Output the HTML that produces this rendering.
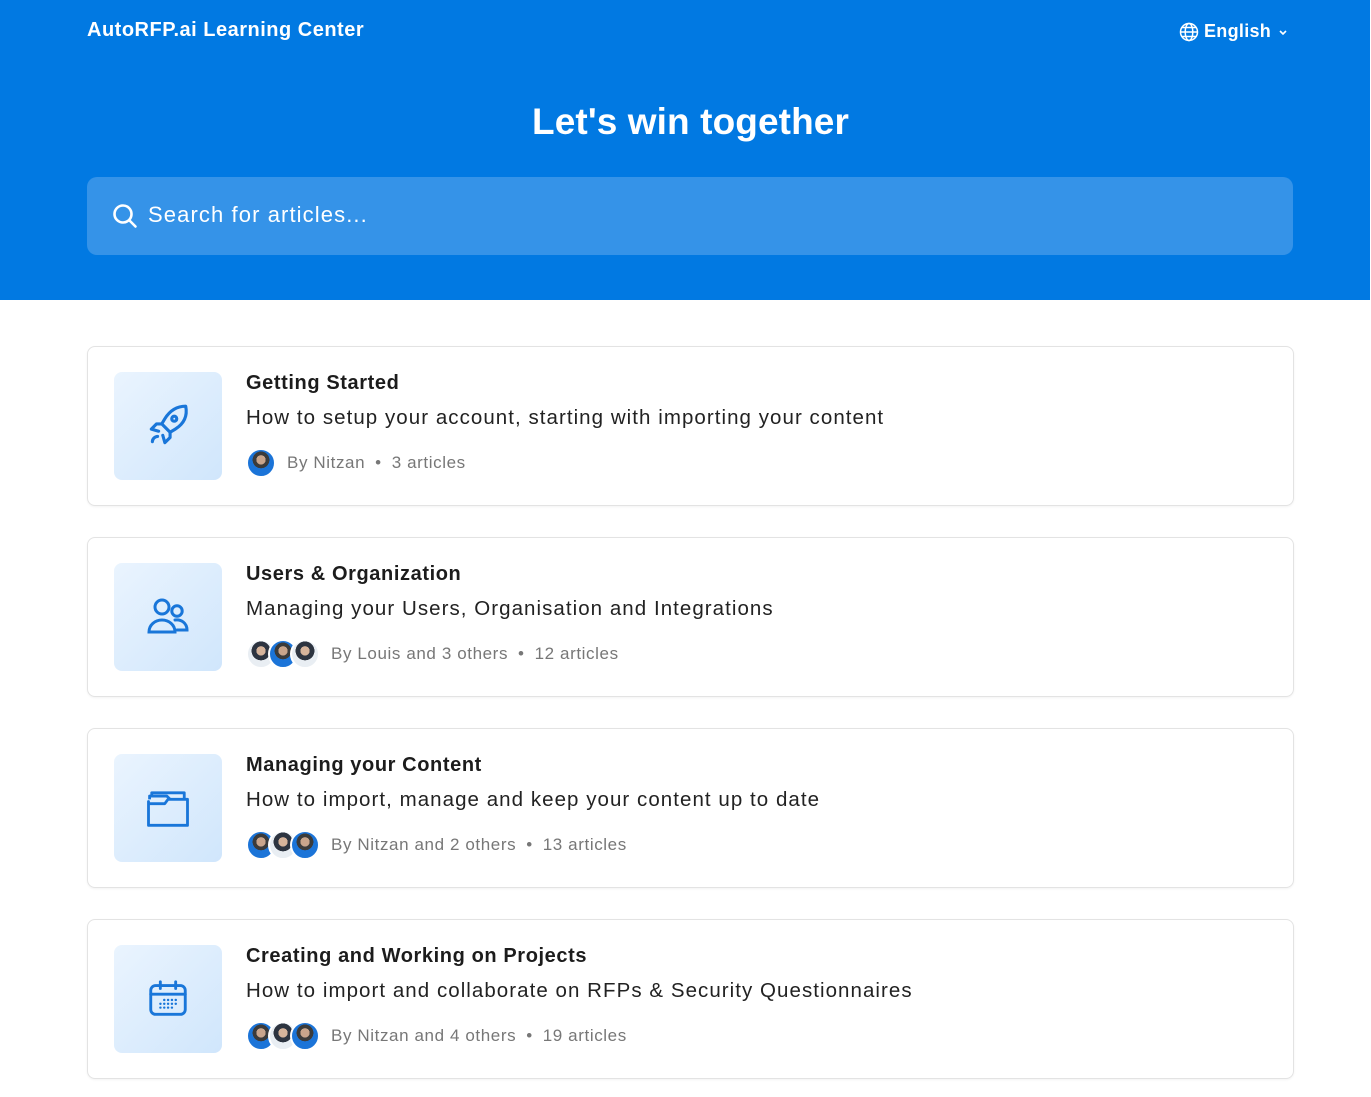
<!DOCTYPE html>
<html><head><meta charset="utf-8"><style>
*{box-sizing:border-box;margin:0;padding:0}
body{width:1371px;height:1097px;overflow:hidden;background:#fff;font-family:"Liberation Sans",sans-serif;color:#1a1a1a}
.hdr{position:absolute;left:0;top:0;width:1370px;height:300px;background:#0179e2}
.logo{position:absolute;left:87px;top:19px;color:#fff;font-weight:bold;font-size:20px;letter-spacing:0.5px}
.lang{position:absolute;left:1179px;top:21px;color:#fff;font-weight:bold;font-size:18px;display:flex;align-items:center;gap:5px;letter-spacing:0.3px}
h1{position:absolute;left:0;width:1371px;top:101px;text-align:center;color:#fff;font-size:37px;font-weight:bold;letter-spacing:0.1px;padding-left:10px}
.search{position:absolute;left:87px;top:177px;width:1206px;height:78px;background:#3593e8;border-radius:10px}
.search span{position:absolute;left:61px;top:25px;color:#fff;font-size:22px;letter-spacing:1.1px}
.card{position:absolute;left:87px;width:1207px;height:160px;border:1px solid #e3e3e3;border-radius:8px;box-shadow:0 1px 2px rgba(0,0,0,.05)}
.ic{position:absolute;left:26px;top:25px;width:108px;height:108px;border-radius:8px;background:linear-gradient(135deg,#eaf4fe,#d0e6fc);display:flex;align-items:center;justify-content:center}
.t{position:absolute;left:158px;top:25px;font-size:20px;font-weight:bold;color:#1c1c1c;letter-spacing:0.6px}
.d{position:absolute;left:158px;top:59px;font-size:20.5px;color:#222;letter-spacing:1.05px}
.m{position:absolute;left:158px;top:101px;height:30px;display:flex;align-items:center;font-size:17px;color:#777;letter-spacing:0.6px}
.av{width:30px;height:30px;border-radius:50%;border:2px solid #fff;background:radial-gradient(circle at 50% 38%,#c9a58c 0 22%,#3b3b3b 23% 40%,#1b74d8 41%);margin-right:-8px}
.av.g{background:radial-gradient(circle at 50% 38%,#d6b49b 0 22%,#2d3440 23% 45%,#e9eef3 46%)}
.m .txt{margin-left:19px}
.dot{margin:0 10px}
</style></head><body>
<div class="hdr">
<div class="logo">AutoRFP.ai Learning Center</div>
<div class="lang"><svg width="20" height="20" viewBox="0 0 20 20" fill="none" stroke="#fff" stroke-width="1.5"><circle cx="10" cy="10" r="8.5"/><ellipse cx="10" cy="10" rx="3.8" ry="8.5"/><path d="M1.5 10h17M3 5.5h14M3 14.5h14"/></svg>English<svg width="14" height="14" viewBox="0 0 14 14" fill="none" stroke="#fff" stroke-width="1.6"><path d="M4 6l3 3 3-3"/></svg></div>
<h1>Let's win together</h1>
<div class="search"><svg style="position:absolute;left:24px;top:25px" width="28" height="28" viewBox="0 0 28 28" fill="none" stroke="#fff" stroke-width="2.6"><circle cx="12" cy="12" r="8.5"/><path d="M18.5 18.5l6 6" stroke-linecap="round"/></svg><span>Search for articles...</span></div>
</div>

<div class="card" style="top:346px"><div class="ic"><svg width="50" height="50" viewBox="0 0 24 24" fill="none" stroke="#1976d9" stroke-width="1.5" stroke-linecap="round" stroke-linejoin="round"><path d="M20.5 2.5c-4 0-7.5 2-10 6l-1.5 2.5 4 4L15.5 13.5c4-2.5 6-6 5-11z"/><circle cx="15" cy="8.5" r="1.2"/><path d="M9 11H6.5l-2.5 2.5 3.5 1"/><path d="M13 15v2.5l-2.5 2.5-1-3.5"/><path d="M7 17c-1 0-2.5 1-2.5 2.5"/></svg></div>
<div class="t">Getting Started</div><div class="d">How to setup your account, starting with importing your content</div>
<div class="m"><div class="av"></div><span class="txt" style="margin-left:19px">By Nitzan</span><span class="dot">•</span>3 articles</div></div>

<div class="card" style="top:537px"><div class="ic"><svg width="48" height="48" viewBox="0 0 24 24" fill="none" stroke="#1976d9" stroke-width="1.5" stroke-linecap="round"><circle cx="9" cy="7" r="3.5"/><path d="M2.5 19.5c0-3.5 3-6 6.5-6s6.5 2.5 6.5 6z"/><circle cx="16.5" cy="9" r="2.6"/><path d="M15.5 13.5c3-.5 6 1.5 6 5h-5"/></svg></div>
<div class="t">Users &amp; Organization</div><div class="d">Managing your Users, Organisation and Integrations</div>
<div class="m"><div class="av g"></div><div class="av"></div><div class="av g"></div><span class="txt">By Louis and 3 others</span><span class="dot">•</span>12 articles</div></div>

<div class="card" style="top:728px"><div class="ic"><svg width="52" height="52" viewBox="0 0 24 24" fill="none" stroke="#1976d9" stroke-width="1.3" stroke-linejoin="round"><path d="M3 9V20h18V8h-9l-1.5 2H3z"/><path d="M3.5 8V6.5h8l1.5 1.5"/><path d="M4.5 6.5V5h15v3"/></svg></div>
<div class="t">Managing your Content</div><div class="d">How to import, manage and keep your content up to date</div>
<div class="m"><div class="av"></div><div class="av g"></div><div class="av"></div><span class="txt">By Nitzan and 2 others</span><span class="dot">•</span>13 articles</div></div>

<div class="card" style="top:919px"><div class="ic"><svg width="46" height="46" viewBox="0 0 24 24" fill="none" stroke="#1976d9" stroke-width="1.5" stroke-linecap="round"><rect x="3" y="5" width="18" height="15" rx="2.5"/><path d="M3 9.5h18M8 3v3.5M16 3v3.5"/><g stroke-width="1.2"><path d="M10 12.5h.1M12 12.5h.1M14 12.5h.1M16 12.5h.1M8 14.5h.1M10 14.5h.1M12 14.5h.1M14 14.5h.1M16 14.5h.1M8 16.5h.1M10 16.5h.1M12 16.5h.1M14 16.5h.1"/></g></svg></div>
<div class="t">Creating and Working on Projects</div><div class="d">How to import and collaborate on RFPs &amp; Security Questionnaires</div>
<div class="m"><div class="av"></div><div class="av g"></div><div class="av"></div><span class="txt">By Nitzan and 4 others</span><span class="dot">•</span>19 articles</div></div>
</body></html>
